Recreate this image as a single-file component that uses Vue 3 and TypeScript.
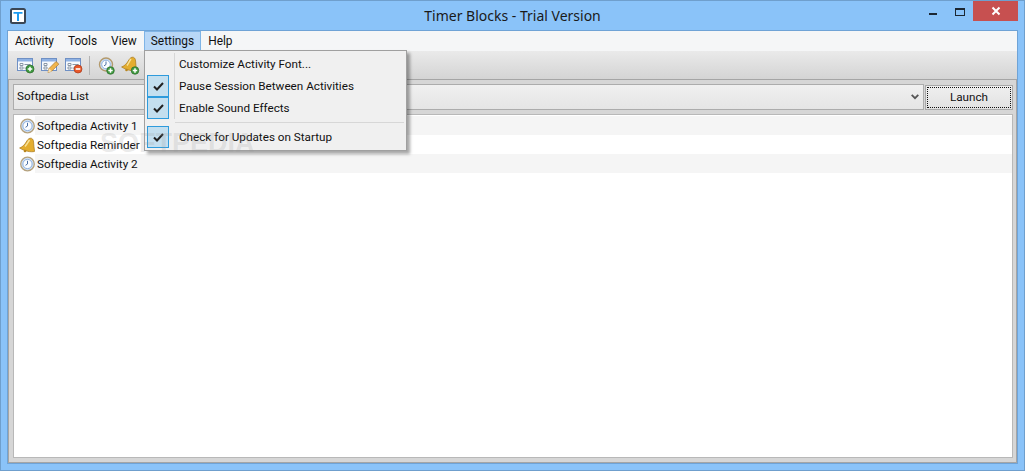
<script setup lang="ts">
const menus = ['Activity', 'Tools', 'View', 'Settings', 'Help']
const rows = [
  { label: 'Softpedia Activity 1', kind: 'clock' },
  { label: 'Softpedia Reminder', kind: 'bell' },
  { label: 'Softpedia Activity 2', kind: 'clock' }
]
const items = [
  { label: 'Customize Activity Font...', checked: false },
  { label: 'Pause Session Between Activities', checked: true },
  { label: 'Enable Sound Effects', checked: true }
]
const bellPath = 'M11 1.2C13 .8 14.5 2.500 14.600 5c.2 3 .4 6 1 9.400C12 15.500 5 14 .6 11 4 9.800 6 7 7.200 5 8.300 3 9.500 1.600 11 1.200z'
</script>

<template>
  <div class="window">
    <header class="titlebar">
      <svg class="appicon" width="16" height="16" viewBox="0 0 16 16">
        <rect x="1" y="1" width="14" height="14" rx="1.500" fill="#fff" stroke="#3a4654" stroke-width="2" />
        <path d="M3.500 4h9v1.800H9V13H7V5.800H3.500z" fill="#1d9bf0" />
      </svg>
      <div class="title">Timer Blocks - Trial Version</div>
      <div class="controls">
        <div class="ctl"><span class="min"></span></div>
        <div class="ctl"><span class="max"></span></div>
        <div class="close">
          <svg width="10" height="10" viewBox="0 0 10 10"><path d="M1.500 1.500l7 7M8.500 1.500l-7 7" stroke="#fff" stroke-width="2" /></svg>
        </div>
      </div>
    </header>

    <div class="client">
      <nav class="menubar">
        <div v-for="m in menus" :key="m" class="menu" :class="{ open: m === 'Settings' }">{{ m }}</div>
      </nav>

      <div class="toolbar">
        <svg class="tool" width="20" height="20" viewBox="0 0 20 20">
          <rect x="1.500" y="3.500" width="15" height="12" fill="#f6f9fd" stroke="#6f90c4" />
          <rect x="2" y="4" width="14" height="2.500" fill="#8fb2e4" />
          <path d="M4 8.500h3v2H4zM4 12h3v2H4z" fill="#fff" stroke="#8a97a6" />
          <path d="M8.500 9.500h6M8.500 13h3" stroke="#8a97a6" />
          <circle cx="14" cy="14" r="4" fill="#3f9a3f" stroke="#2d6a2d" stroke-width=".7" />
          <path d="M14 11.700v4.600M11.700 14h4.600" stroke="#fff" stroke-width="1.500" />
        </svg>
        <svg class="tool" width="20" height="20" viewBox="0 0 20 20">
          <rect x="1.500" y="3.500" width="15" height="12" fill="#f6f9fd" stroke="#6f90c4" />
          <rect x="2" y="4" width="14" height="2.500" fill="#8fb2e4" />
          <path d="M4 8.500h3v2H4zM4 12h3v2H4z" fill="#fff" stroke="#8a97a6" />
          <path d="M8 17.500l1-4 7-7 2.800 2.600-7 7z" fill="#f1b54c" stroke="#a9742a" stroke-width=".7" />
          <path d="M8 17.500l1-4 3 2.800z" fill="#f6dfb4" />
        </svg>
        <svg class="tool" width="20" height="20" viewBox="0 0 20 20">
          <rect x="1.500" y="3.500" width="15" height="12" fill="#f6f9fd" stroke="#6f90c4" />
          <rect x="2" y="4" width="14" height="2.500" fill="#8fb2e4" />
          <path d="M4 8.500h3v2H4zM4 12h3v2H4z" fill="#fff" stroke="#8a97a6" />
          <path d="M8.500 9.500h6M8.500 13h3" stroke="#8a97a6" />
          <circle cx="14" cy="14" r="4" fill="#e8582a" stroke="#a73a1a" stroke-width=".7" />
          <path d="M11.700 14h4.600" stroke="#fff" stroke-width="1.600" />
        </svg>
        <span class="sep"></span>
        <svg class="tool clock-tool" width="20" height="20" viewBox="0 0 20 20">
          <circle cx="8" cy="9.500" r="6.500" fill="#cfe0f5" stroke="#b49a6c" stroke-width="1.400" />
          <circle cx="8" cy="9.500" r="4.300" fill="#fbfdff" stroke="#8fb0dc" stroke-width="1" />
          <path d="M8 6.500v3l-2 1.400" fill="none" stroke="#4a6fa5" stroke-width="1" />
          <circle cx="12.500" cy="15.500" r="3.800" fill="#3f9a3f" stroke="#2d6a2d" stroke-width=".7" />
          <path d="M12.500 13.300v4.400M10.300 15.500h4.400" stroke="#fff" stroke-width="1.500" />
        </svg>
        <svg class="tool bell-tool" width="20" height="20" viewBox="0 0 20 20">
          <path :d="bellPath" transform="translate(0 1)" fill="#e3ad2f" stroke="#a8791d" stroke-width=".7" />
          <path d="M10 4c-1.500 2-2.500 4.500-4 6.500" fill="none" stroke="#f8e39a" stroke-width="1.500" />
          <circle cx="5.500" cy="15" r="1.300" fill="#b8861f" />
          <circle cx="14" cy="15.500" r="3.800" fill="#3f9a3f" stroke="#2d6a2d" stroke-width=".7" />
          <path d="M14 13.300v4.400M11.800 15.500h4.400" stroke="#fff" stroke-width="1.500" />
        </svg>
      </div>

      <main class="body">
        <div class="picker">
          <div class="combo">
            <span class="combo-text">Softpedia List</span>
            <svg width="8" height="6" viewBox="0 0 8 6"><path d="M.7.900L4 4.200 7.300.900" fill="none" stroke="#555" stroke-width="1.800" /></svg>
          </div>
          <button class="launch"><span>Launch</span></button>
        </div>

        <ul class="list">
          <li v-for="r in rows" :key="r.label" class="row">
            <span class="icon-cell">
              <svg v-if="r.kind === 'clock'" width="16" height="16" viewBox="0 0 16 16">
                <circle cx="8.500" cy="8" r="6.800" fill="#cfe0f5" stroke="#b5a27e" stroke-width="1.300" />
                <circle cx="8.500" cy="8" r="4.600" fill="#fbfdff" stroke="#8fb0dc" stroke-width="1" />
                <path d="M8.500 4.800V8l-2 1.300" fill="none" stroke="#4a6fa5" stroke-width="1" />
              </svg>
              <svg v-else width="16" height="16" viewBox="0 0 16 16">
                <path :d="bellPath" fill="#e3ad2f" stroke="#a8791d" stroke-width=".7" />
                <path d="M10.500 3c-1.500 2-2.500 4.500-4.500 6.500" fill="none" stroke="#f8e39a" stroke-width="1.500" />
                <circle cx="6" cy="14" r="1.300" fill="#b8861f" />
              </svg>
            </span>
            <span class="label">{{ r.label }}</span>
          </li>
        </ul>
      </main>

      <div class="watermark">SOFTPEDIA</div>

      <div class="dropdown">
        <div v-for="i in items" :key="i.label" class="item">
          <span class="gutter">
            <span v-if="i.checked" class="check">
              <svg width="11" height="9" viewBox="0 0 11 9"><path d="M1 4.500l3 3 6-6.500" fill="none" stroke="#222" stroke-width="2" /></svg>
            </span>
          </span>
          <span class="text">{{ i.label }}</span>
        </div>
        <div class="divider"></div>
        <div class="item">
          <span class="gutter plain">
            <span class="check">
              <svg width="11" height="9" viewBox="0 0 11 9"><path d="M1 4.500l3 3 6-6.500" fill="none" stroke="#222" stroke-width="2" /></svg>
            </span>
          </span>
          <span class="text">Check for Updates on Startup</span>
        </div>
      </div>
    </div>
  </div>
</template>

<style>
html, body { margin: 0; padding: 0; overflow: hidden; }
</style>

<style scoped>
.window {
  box-sizing: border-box;
  width: 1025px;
  height: 471px;
  background: #8ac3f9;
  border: 1px solid #6f9fcd;
  padding: 0 6px 6px;
  display: flex;
  flex-direction: column;
  font-family: Roboto, "Noto Sans", sans-serif;
  font-size: 11.7px;
  color: #111;
  position: relative;
  overflow: hidden;
}
.titlebar {
  height: 29px;
  flex: none;
  position: relative;
  display: flex;
  align-items: center;
}
.appicon { margin-left: 3px; flex: none; }
.title {
  position: absolute;
  left: 0;
  right: 0;
  top: 5px;
  text-align: center;
  font-family: "Noto Sans", sans-serif;
  font-size: 14px;
  line-height: 20px;
  color: #1a1a1a;
}
.controls {
  position: absolute;
  right: 0;
  top: 0;
  display: flex;
  align-items: flex-start;
}
.ctl { width: 26px; height: 20px; position: relative; }
.min {
  position: absolute; left: 8px; top: 12px;
  width: 8px; height: 2px; background: #1c2733;
}
.max {
  position: absolute; left: 8px; top: 7px;
  box-sizing: border-box;
  width: 10px; height: 8px;
  border: 1px solid #1c2733; border-top-width: 2px;
}
.close {
  width: 45px; height: 20px;
  background: #c75050;
  display: flex; align-items: center; justify-content: center;
}
.client {
  flex: 1;
  min-height: 0;
  display: flex;
  flex-direction: column;
  position: relative;
  border: 1px solid #6fa3d6;
  background: #d6d6d6;
}
.menubar {
  height: 20px;
  flex: none;
  display: flex;
  background: #f5f6f7;
}
.menu {
  box-sizing: border-box;
  padding: 0 6px;
  font-size: 11.9px;
  line-height: 18px;
  height: 20px;
  border: 1px solid transparent;
}
.menu.open { background: #b8d7f7; border-color: #7fb4e6; }
.toolbar {
  height: 29px;
  flex: none;
  box-sizing: border-box;
  display: flex;
  align-items: center;
  gap: 4px;
  padding: 0 0 0 8px;
  background: linear-gradient(#eaeaea, #d4d4d4);
  border-bottom: 1px solid #a5a5a5;
}
.tool { flex: none; }
.sep { width: 1px; height: 19px; background: #b3b3b3; margin-left: 1px; }
.clock-tool { margin-left: 4px; }
.bell-tool { margin-left: -1px; }
.body {
  flex: 1;
  min-height: 0;
  display: flex;
  flex-direction: column;
  gap: 4px;
  padding: 4px 3px 4px 4px;
  background: #d6d6d6;
  border-left: 1px solid #a5a5a5;
  border-right: 1px solid #a5a5a5;
  border-bottom: 1px solid #a5a5a5;
}
.picker { display: flex; gap: 1px; height: 26px; flex: none; }
.combo {
  box-sizing: border-box;
  flex: 1;
  display: flex;
  align-items: center;
  justify-content: space-between;
  padding: 0 4px 0 3px;
  border: 1px solid #acacac;
  background: linear-gradient(#f0f0f0, #e5e5e5);
}
.combo-text { margin-bottom: 2px; }
.launch {
  box-sizing: border-box;
  width: 88px;
  padding: 1px;
  height: 25px;
  margin-top: 1px;
  border: 1px solid #a8a8a8;
  background: linear-gradient(#efefef, #e2e2e2);
  font: inherit;
  color: inherit;
  display: flex;
}
.launch span {
  flex: 1;
  display: flex;
  align-items: center;
  justify-content: center;
  padding-bottom: 2px;
  border: 1px dotted #111;
}
.list {
  list-style: none;
  margin: 0;
  padding: 1px 0 0 0;
  flex: 1;
  min-height: 0;
  background: #fff;
  border: 1px solid #b8b8b8;
}
.row {
  height: 19px;
  display: flex;
  align-items: stretch;
}
.icon-cell {
  width: 21px;
  flex: none;
  display: flex;
  align-items: center;
  justify-content: flex-end;
  padding-top: 1px;
  box-sizing: border-box;
}
.label {
  flex: 1;
  padding-left: 2px;
  line-height: 20px;
}
.row:nth-child(odd) .label { background: #f5f5f5; }
.watermark {
  position: absolute;
  left: 92px;
  top: 97px;
  font-family: "Liberation Sans", sans-serif;
  font-size: 27px;
  line-height: 30px;
  color: rgba(150, 150, 150, .2);
  font-weight: 700;
  pointer-events: none;
  z-index: 3;
}
.dropdown {
  position: absolute;
  left: 136px;
  top: 19px;
  width: 263px;
  box-sizing: border-box;
  background: #f0f0f0;
  border: 1px solid #a0a0a0;
  box-shadow: 3px 3px 3px rgba(0, 0, 0, .35);
  padding: 2px;
  z-index: 2;
}
.item { display: flex; height: 22px; align-items: center; }
.gutter {
  width: 27px;
  height: 22px;
  flex: none;
  border-right: 1px solid #d7d7d7;
  display: flex;
  align-items: center;
}
.gutter.plain { border-right-color: transparent; }
.check {
  box-sizing: border-box;
  width: 22px;
  height: 22px;
  background: #c4dfef;
  border: 1px solid #2e9bdc;
  display: flex;
  align-items: center;
  justify-content: center;
}
.text { padding-left: 4px; white-space: nowrap; }
.divider { height: 1px; background: #d7d7d7; margin: 3px 0 3px 28px; }
</style>
